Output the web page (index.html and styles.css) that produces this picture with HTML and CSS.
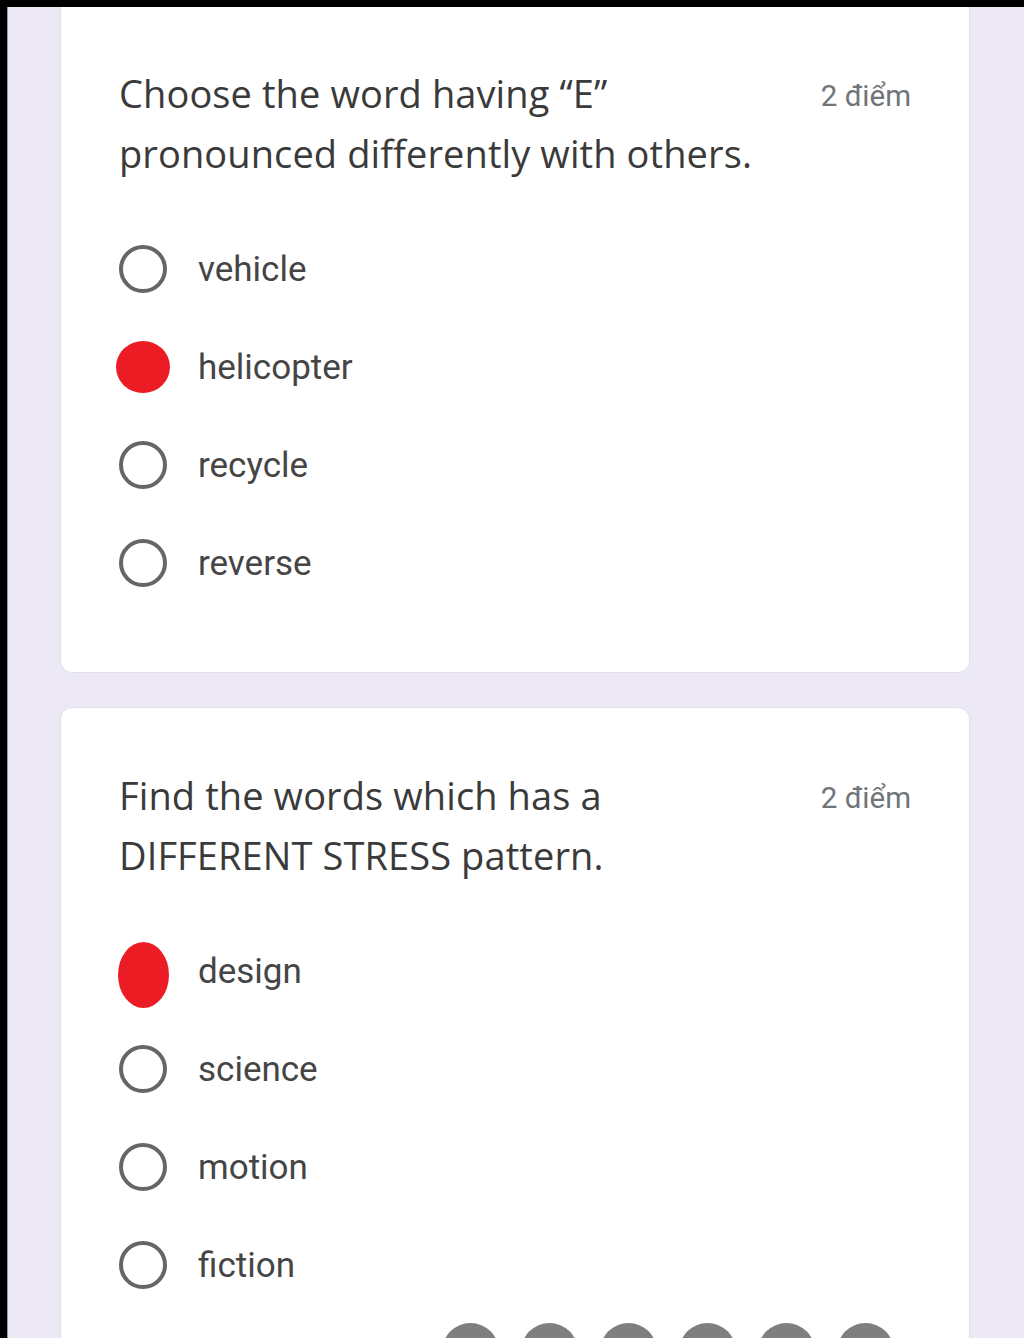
FILE: index.html
```html
<!DOCTYPE html>
<html lang="vi">
<head>
    <meta charset="UTF-8">
    <meta name="viewport" content="width=device-width, initial-scale=1.0">
    <title>Bài kiểm tra</title>
    <link rel="stylesheet" href="styles.css">
</head>
<body>
    <div class="page">
        <div class="card first">
            <div class="question-head">
                <div class="question-title">Choose the word having “E” pronounced differently with others.</div>
                <div class="points">2 điểm</div>
            </div>
            <div class="options">
                <div class="option"><span class="radio"></span><span class="label">vehicle</span></div>
                <div class="option"><span class="radio marked"></span><span class="label">helicopter</span></div>
                <div class="option"><span class="radio"></span><span class="label">recycle</span></div>
                <div class="option"><span class="radio"></span><span class="label">reverse</span></div>
            </div>
        </div>

        <div class="card">
            <div class="question-head">
                <div class="question-title">Find the words which has a DIFFERENT STRESS pattern.</div>
                <div class="points">2 điểm</div>
            </div>
            <div class="options">
                <div class="option"><span class="radio marked tall"></span><span class="label">design</span></div>
                <div class="option"><span class="radio"></span><span class="label">science</span></div>
                <div class="option"><span class="radio"></span><span class="label">motion</span></div>
                <div class="option"><span class="radio"></span><span class="label">fiction</span></div>
            </div>
            <div class="dots">
                <span class="dot"></span>
                <span class="dot"></span>
                <span class="dot"></span>
                <span class="dot"></span>
                <span class="dot"></span>
                <span class="dot"></span>
            </div>
        </div>
    </div>
</body>
</html>
```

FILE: styles.css
```css
html, body {
    margin: 0;
    height: 100%;
}

body {
    background: #000;
    padding: 7px 0 0 7px;
    box-sizing: border-box;
    overflow: hidden;
}

.page {
    background: #ece8f6;
    height: 100%;
    padding: 0 54px 0 52px;
    overflow: hidden;
    border-left: 1px solid #9a97a0;
}

.card {
    background: #fff;
    border-radius: 12px;
    border: 1px solid #e2dfe8;
    padding: 57px 58px 60px 58px;
    margin-bottom: 34px;
}

.card.first {
    margin-top: -20px;
    padding-top: 75px;
}

.question-head {
    display: flex;
    justify-content: space-between;
    align-items: flex-start;
}

.question-title {
    width: 670px;
    font-family: "Open Sans", sans-serif;
    font-size: 38px;
    line-height: 60px;
    color: #3a3a3a;
    letter-spacing: 0.1px;
}

.points {
    font-family: Roboto, sans-serif;
    font-size: 29.5px;
    line-height: 60px;
    color: #70757a;
    padding-top: 3px;
}

.options {
    margin-top: 37px;
}

.option {
    height: 98px;
    display: flex;
    align-items: center;
}

.radio {
    width: 40px;
    height: 40px;
    border: 4px solid #666;
    border-radius: 50%;
    margin-right: 31px;
    flex-shrink: 0;
}

.radio.marked {
    background: #ec1c24;
    border: none;
    width: 54px;
    height: 52px;
    margin-left: -3px;
    margin-right: 28px;
}

.radio.marked.tall {
    width: 51px;
    height: 66px;
    margin-left: -1px;
    margin-right: 29px;
    margin-top: 8px;
}

.label {
    font-family: Roboto, sans-serif;
    font-size: 35px;
    color: #454545;
}

.dots {
    display: flex;
    justify-content: flex-end;
    gap: 22px;
    margin-top: 9px;
    padding-right: 17px;
}

.dot {
    width: 57px;
    height: 57px;
    border-radius: 50%;
    background: #7f7f7f;
}
```
